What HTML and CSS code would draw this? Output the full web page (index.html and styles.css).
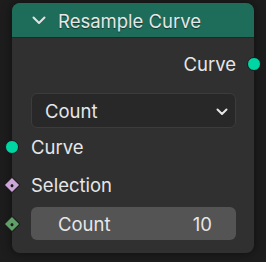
FILE: index.html
```html
<!DOCTYPE html>
<html lang="en">
<head>
  <meta charset="utf-8" />
  <title>Resample Curve</title>
  <link rel="stylesheet" href="styles.css">
</head>
<body>
  <div class="node">
    <div class="head">
      <svg class="fold" width="14" height="9" viewBox="0 0 14 9"><path d="M1.5 1.5 L7 7 L12.5 1.5" fill="none" stroke="#e2e2e2" stroke-width="2" stroke-linecap="round" stroke-linejoin="round"/></svg>
      <span class="title">Resample Curve</span>
    </div>

    <div class="body">
      <div class="row out">
        <span>Curve</span>
        <i class="sock circle right"></i>
      </div>

      <div class="select">
        <span>Count</span>
        <svg width="12" height="8" viewBox="0 0 12 8"><path d="M1.5 1.5 L6 6 L10.5 1.5" fill="none" stroke="#e6e6e6" stroke-width="2" stroke-linecap="round" stroke-linejoin="round"/></svg>
      </div>

      <div class="row in">
        <i class="sock circle left"></i>
        <span>Curve</span>
      </div>

      <div class="row in">
        <i class="sock diamond left sel"></i>
        <span>Selection</span>
      </div>

      <div class="row field-row">
        <i class="sock diamond left int"></i>
        <div class="field">
          <span>Count</span>
          <span>10</span>
        </div>
      </div>
    </div>
  </div>
</body>
</html>
```

FILE: styles.css
```css
:root{
  --bg:#1d1d1d; --node:#303030; --head:#1e6d5b; --text:#e6e6e6;
  --geo:#00d6a3; --sel:#cca6d9; --int:#5f9f68;
}
*{box-sizing:border-box;margin:0;padding:0}
body{background:var(--bg);font-family:Inter,'Noto Sans',sans-serif;color:var(--text);font-size:18.5px;width:266px;height:262px;overflow:hidden}
.node{margin:3px 0 0 12px;width:242px;height:250px;background:var(--node);border-radius:8px;box-shadow:0 0 8px 2px rgba(0,0,0,.35);position:relative}
.head{height:35px;background:var(--head);border-radius:8px 8px 0 0;border-bottom:1px solid #1f2a27;display:flex;align-items:center;padding-left:20px;gap:12px}
.title{text-shadow:0 1px 1px rgba(0,0,0,.5);position:relative;top:1px}
.body{padding:14px 0 0}
.row{position:relative;display:flex;align-items:center}
.out{height:24px;justify-content:flex-end;padding-right:18px}
.in{height:38px;padding-left:19px}
.select{margin:17px 18px 0 19px;height:35px;background:#282828;border:1px solid #3c3c3c;border-radius:6px;display:flex;align-items:center;justify-content:space-between;padding:0 7px 0 13px}
.select svg{margin-top:2px}
.field-row{margin-top:3px;height:33px}
.field{margin:0 18px 0 19px;flex:1;height:33px;background:#545454;border-radius:6px;display:flex;align-items:center;justify-content:space-between;padding:0 24px 0 27px}
.sock{position:absolute;top:50%;display:block;border:1px solid #1a1a1a}
.circle{width:14px;height:14px;border-radius:50%;background:var(--geo);margin-top:-7px}
.circle.right{right:-7px}
.circle.left{left:-7px}
.diamond{width:12px;height:12px;margin-top:-6px;left:-6px;transform:rotate(45deg);border-radius:1px}
.diamond::after{content:'';position:absolute;left:4px;top:4px;width:3px;height:3px;border-radius:50%;background:#1a1a1a}
.sel{background:var(--sel)}
.int{background:var(--int)}
```
